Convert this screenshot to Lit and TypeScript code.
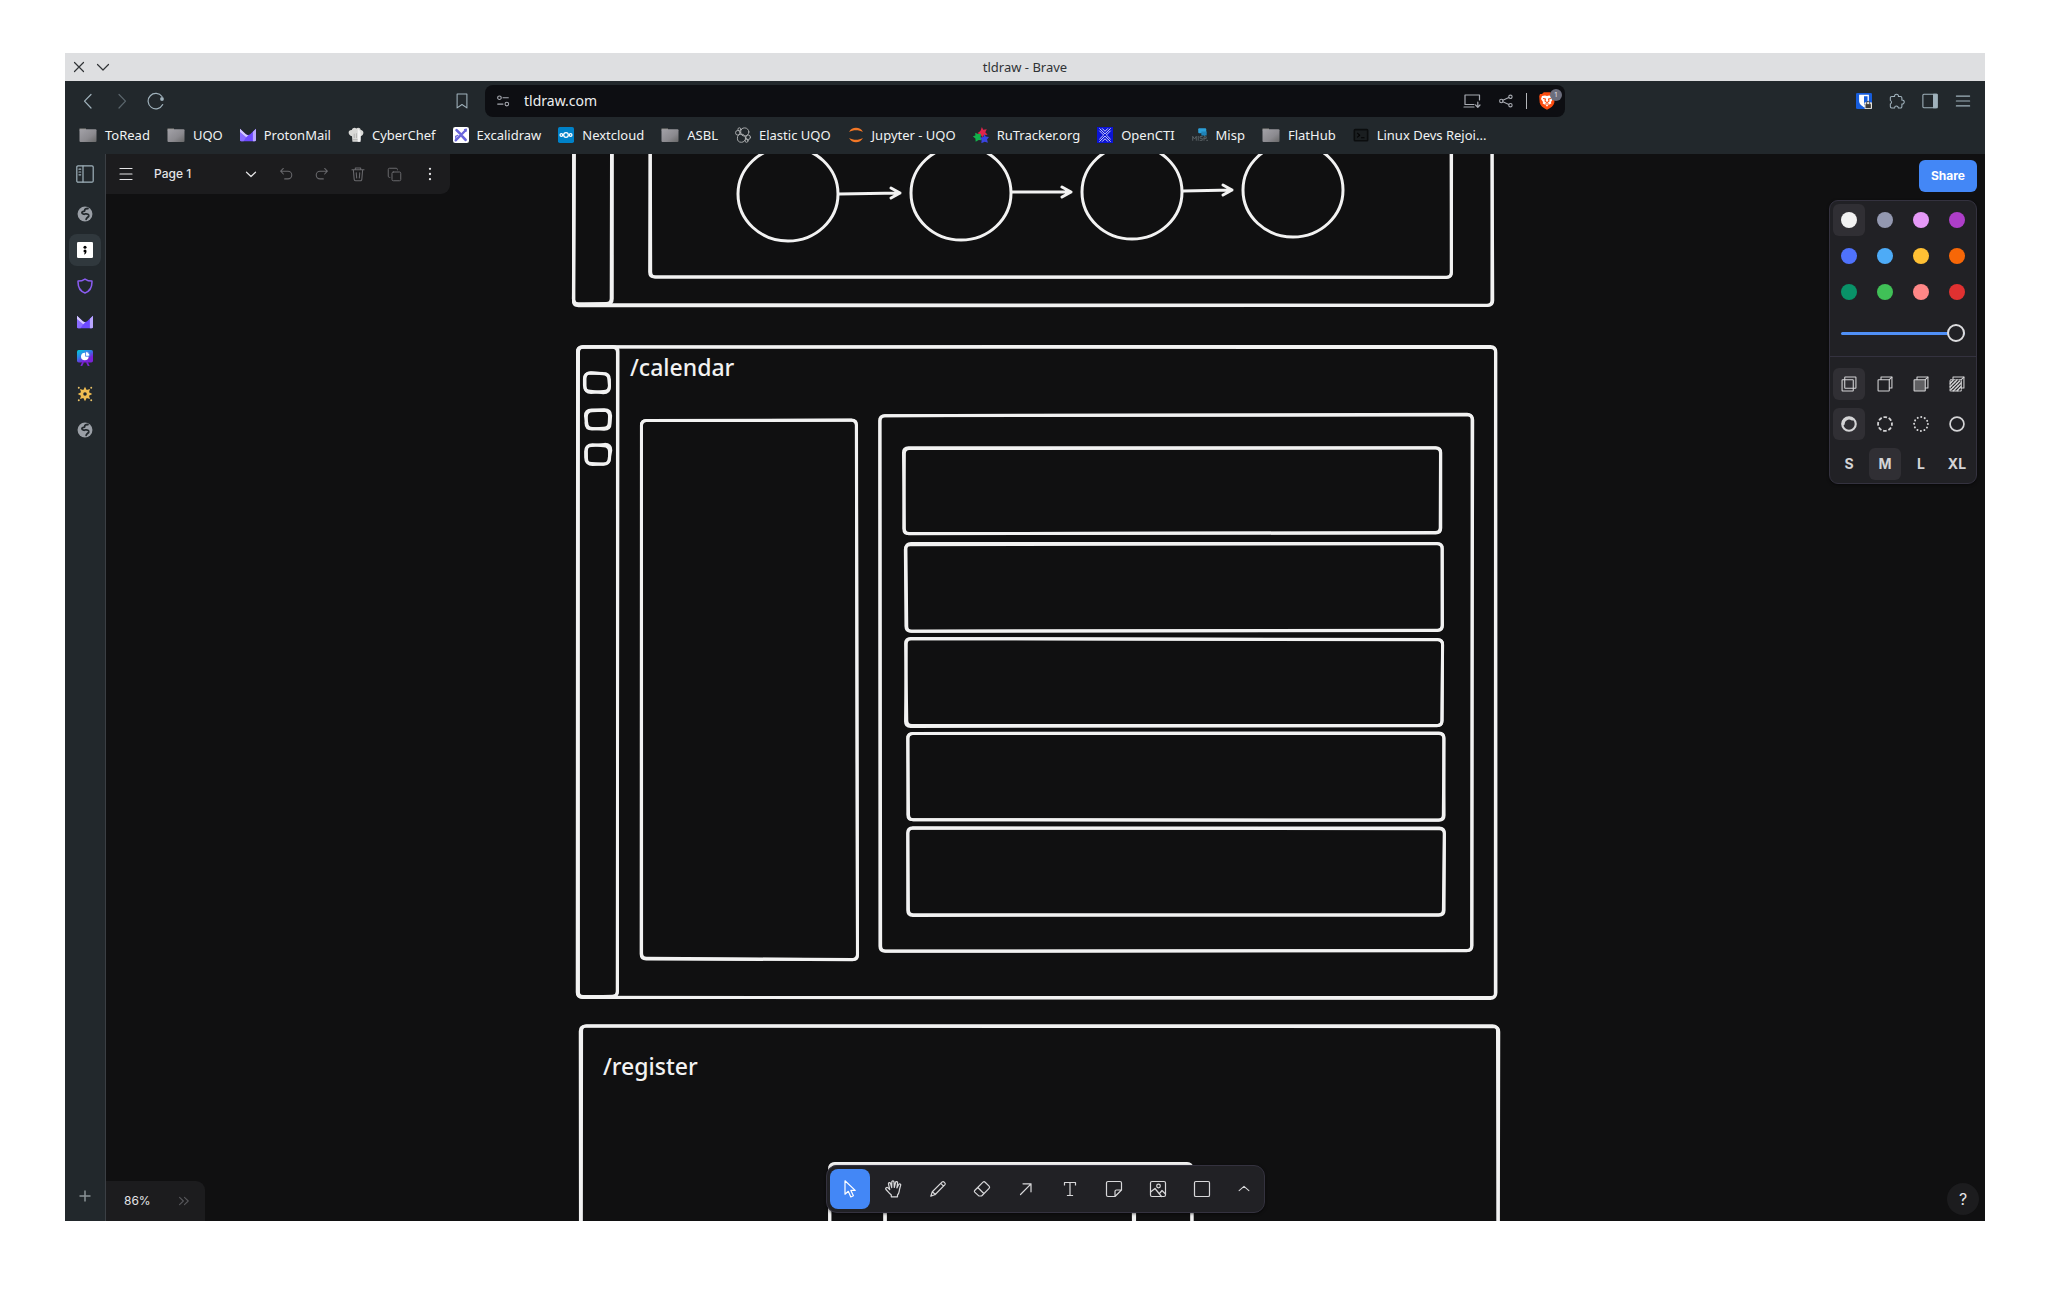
import { LitElement, html, svg, css } from "lit";
import { customElement, state } from "lit/decorators.js";
import { classMap } from "lit/directives/class-map.js";

const icon = (body: unknown, size = 18) =>
  html`<svg class="ic" width=${size} height=${size} viewBox="0 0 18 18" fill="none" stroke="currentColor" stroke-width="1.2" stroke-linecap="round" stroke-linejoin="round" aria-hidden="true">${body}</svg>`;

/* ---------- browser icons ---------- */
const folder = svg`<defs><linearGradient id="fg" x1="0" y1="0" x2="1" y2="1"><stop offset="0" stop-color="#a3a2a8"/><stop offset=".6" stop-color="#8b8a8f"/><stop offset="1" stop-color="#686868"/></linearGradient></defs>
  <path d="M.5 2.5h6.5v1.5h-6.5z" fill="#8c8b84" stroke="none"/><rect x=".5" y="3.2" width="17" height="12.8" rx="1" fill="url(#fg)" stroke="none"/>`;
const proton = svg`<path d="M0 2L6.600 8.200Q9 10 11.400 8.200L18 2V14.500Q18 16 16.500 16H1.500Q0 16 0 14.500Z" fill="#6d4aff" stroke="none"/>
  <path d="M0 5.500L7 11.500 4 16H1.500Q0 16 0 14.500Z" fill="#8a6cff" stroke="none"/>
  <path d="M0 2L6.600 8.200Q8 9.300 9.500 9.200L7 11.500 0 5.500Z" fill="#d6caff" stroke="none"/><path d="M14.500 5.300L18 2V14.500Q18 16 16.500 16H14.500Z" fill="#b9a6ff" stroke="none"/>`;
const chef = svg`<path d="M4.500 10.500C-.5 9-.5 3 4.300 3.300 5 .8 8 .3 9.300 1.800 11 .2 14 .8 14.400 3.400c4 .2 4 6-.5 7.100v6H5z" fill="#d9d9d7" stroke="none"/><path d="M5 14.300h9M7 8v4M9.500 7.500v4.500M12 8v4" stroke="#aaa" stroke-width=".9"/><path d="M11 2c3 2 4 5 2.900 14.500h-3z" fill="#f4f4f4" stroke="none"/>`;
const excali = svg`<rect width="18" height="18" rx="2.500" fill="#fff" stroke="none"/><g stroke="#6965db"><path d="M3 15L14 4" stroke-width="2.600"/><path d="M4 3.500l4 4M10.500 10.500l3.700 4" stroke-width="3"/><path d="M13 3l2-.5-.5 2.500M5.500 9.500l-2.500 1 .5 4" stroke-width="1.500"/></g>`;
const nextcloud = svg`<rect width="18" height="18" rx="2" fill="#0082c9" stroke="none"/><g stroke="#fff" stroke-width="1.400"><circle cx="9" cy="9" r="2.600"/><circle cx="3.800" cy="9" r="1.500"/><circle cx="14.200" cy="9" r="1.500"/></g>`;
const elastic = svg`<g stroke="#b5b7b8" stroke-width="1"><circle cx="11" cy="5.600" r="4.600"/><circle cx="7.300" cy="12.600" r="4.600"/><circle cx="3.200" cy="6.500" r="2.600"/><circle cx="14.800" cy="11.500" r="2.600"/><circle cx="5" cy="2.600" r="1.700"/><circle cx="13" cy="15.500" r="1.700"/></g>`;
const jupyter = svg`<path d="M1.200 5.500C4-.8 14-.8 16.800 5.500 12 2.900 6 2.900 1.200 5.500zM1.200 12.500c2.800 6.300 12.800 6.300 15.600 0-4.800 2.600-10.800 2.600-15.600 0z" fill="#f37726" stroke="none"/>`;
const rutracker = svg`<g stroke="none"><path d="M10 0l1.500 3 4-.5-1.700 3.500 2.700 2.700-4 .3-2.200 2.500-1.600-3.200-3.700-1.300 3.300-2.500z" fill="#e0244a"/><path d="M2.500 6.500l3 1.500L9 7.500l-.4 3.800 1.400 3.500-3.600-.3L3 16.500l-.3-3.700L-.3 10.500l3-.8z" fill="#12b24b"/><path d="M13 8l1.300 2.700 3.700.6-2.200 2.700 1 3.800-3.700-1.200-3.700 1.700.3-4L7.800 12l3.800-.8z" fill="#3a44e0"/></g>`;
const opencti = svg`<rect width="18" height="18" fill="#0b14d6" stroke="none"/><g stroke="#fff" stroke-width=".9"><path d="M3 1.800l6 6 6-6M6 1.800l3 3 3-3M3 16.200l6-6 6 6M6 16.200l3-3 3 3M3 4.500L7.500 9 3 13.500M15 4.500L10.500 9l4.500 4.500"/></g>`;
const misp = svg`<g stroke="none"><rect x="7" y="1.500" width="9" height="5.500" rx="1" fill="#2c9fd8"/><path d="M10.500 5h6v4.500h-2l-1 1.500v-1.500h-3z" fill="#1f83b8"/></g><path d="M.8 15v-4.500l2 3 2-3V15M7 10.500V15M11.500 10.700H9v2h2.500V15H9M13.500 15v-4h2.500v2h-2.500M16.500 15h1.500" stroke="#596064" stroke-width="1.100"/>`;
const terminal = svg`<rect x="1.500" y="3" width="15" height="12.500" rx="1" stroke="#0b0d0e" fill="#1a1e20" stroke-width="1.800"/><path d="M5 7l2.500 2.300L5 11.500M9.500 12h3" stroke="#050505"/>`;
const globe = svg`<circle cx="9" cy="9" r="8.400" fill="#9a9fa6" stroke="none"/><path d="M12.300 2.800c-2.800 0-3.800.6-3.600 2.200.1 1.500-3 .8-3.200 2.500C5.400 9 7 8.900 8.200 9.300M9.200 8.900c2.500-.4 4.300.4 4 2.300-.3 1.500-2.200 1.500-2.900 3.800" stroke="#22282c" stroke-width="2"/>`;
const tld = svg`<rect width="18" height="18" rx="1.500" fill="#fff" stroke="none"/><circle cx="9" cy="5.800" r="1.700" fill="#000" stroke="none"/><path d="M7.300 10.200a1.700 1.700 0 0 1 3.400 0c0 1.800-.8 3.300-2.400 4l-.5-.6c.8-.5 1.100-1.100 1.200-1.700a1.700 1.700 0 0 1-1.700-1.700z" fill="#000" stroke="none"/>`;
const shield = svg`<path d="M9 1.200c2.200 1.500 5 2.300 7.800 2.300.3 6.500-1.600 11.200-7.800 13.300C2.800 14.700.9 10 1.200 3.500 4 3.500 6.800 2.700 9 1.200z" stroke="#8a5cf0" stroke-width="1.700"/>`;
const slides = svg`<defs><linearGradient id="sg" x1="0" y1="0" x2=".7" y2="1"><stop offset="0" stop-color="#00d0d8"/><stop offset=".45" stop-color="#2f7fe8"/><stop offset=".8" stop-color="#7a22d8"/></linearGradient></defs><rect x="0" y="0" width="18" height="14" rx="2" fill="url(#sg)" stroke="none"/><path d="M6.500 14.500l-1.500 3M11.500 14.500l1.500 3" stroke="#7b24d6" stroke-width="2"/><circle cx="8.800" cy="7.300" r="4.300" fill="#fff" stroke="none"/><path d="M9.600 6.600V1.700a4.700 4.700 0 0 1 4.800 4.900z" fill="#fff" stroke="#3a76e4" stroke-width=".9"/>`;
const sun = svg`<path d="M9 .8l1.900 3.700 3.700-1.100-1.100 3.700L17.200 9l-3.700 1.900 1.100 3.700-3.700-1.100L9 17.200l-1.900-3.700-3.700 1.100 1.100-3.700L.8 9l3.700-1.900-1.100-3.700 3.700 1.100z" fill="#f0bd52" stroke="none"/><circle cx="9" cy="9" r="2" fill="#22282c" stroke="none"/><g fill="#e8c26a" stroke="none"><circle cx="2" cy="2" r="1.100"/><circle cx="16" cy="2" r="1.100"/><circle cx="2" cy="16" r="1.100"/><circle cx="16" cy="16" r="1.100"/></g>`;

const back = svg`<path d="M12 2.500L5.500 9.200 12 16"/>`;
const fwd = svg`<path d="M6 2.500l6.500 6.700L6 16"/>`;
const reload = svg`<path d="M15.700 12.600A7.700 7.700 0 1 1 15 4.500"/><circle cx="15" cy="7" r="1.900" fill="currentColor" stroke="none"/>`;
const bookmark = svg`<path d="M3.500 1.200h11v15.600L9 13l-5.500 3.800z"/>`;
const tune = svg`<circle cx="5" cy="5.300" r="2"/><path d="M9 5.300h6M3 12.500h6"/><circle cx="13.300" cy="12.500" r="2"/>`;
const install = svg`<path d="M16.500 8V3H2v9.500M1 15h10M2 12.500h9M14.800 10v5M12.600 13l2.200 2.300L17 13"/>`;
const shareIc = svg`<circle cx="3.700" cy="9" r="1.900"/><circle cx="14" cy="4.300" r="1.900"/><circle cx="14" cy="13.700" r="1.900"/><path d="M5.500 8.200l6.700-3.100M5.500 9.800l6.700 3.100"/>`;
const brave = svg`<path d="M9 .3l3.200 0L14 2l2-.1.800 2.300-.5 6.500c-.5 3-3.500 5-7.300 7-3.800-2-6.800-4-7.300-7l-.5-6.500L2 1.900 4 2 5.800.3z" fill="#fb4c10" stroke="none"/><path d="M4 4l3-.6 2 .6 2-.6 3 .6 1 3-2 3 .3 1.500-3 1.500L9 14.700 7.700 13l-3-1.500L5 10 3 7z" fill="#fff" stroke="none"/><path d="M5.500 6.500l2 .6-.5 2 2 1.500 2-1.500-.5-2 2-.6M7.500 12h3" stroke="#fb4c10" stroke-width="1.100"/>`;
const bitwarden = svg`<rect width="18" height="18" rx="1.500" fill="#175ddc" stroke="none"/><path d="M3.500 2h11v7c0 3.500-3 5.500-5.500 7-2.500-1.500-5.500-3.500-5.500-7z" fill="#fff" stroke="none"/><path d="M9 3.700h4V9c0 1.800-1.600 3.500-4 5z" fill="#175ddc" stroke="none"/><rect x="9.500" y="10.500" width="8.500" height="7.500" rx="1" fill="#e8e4da" stroke="none"/><rect x="10.700" y="12.500" width="6" height="4.500" fill="#3c3c3c" stroke="none"/><path d="M12 12.500v-1.500a1.700 1.700 0 0 1 3.400 0v1.500" stroke="#3c3c3c" stroke-width="1"/>`;
const puzzle = svg`<path d="M1.500 5.500A1.500 1.500 0 0 1 3 4h3.300a2.200 2.200 0 1 1 4.300 0H13a1.500 1.500 0 0 1 1.500 1.500V8a2.200 2.200 0 1 1 0 4.300v3a1.500 1.500 0 0 1-1.500 1.500h-2.500a2.100 2.100 0 1 0-4.200 0H3a1.500 1.500 0 0 1-1.500-1.500v-3a2.200 2.200 0 0 0 0-4z"/>`;
const sidePanel = svg`<rect x="1" y="1.500" width="16" height="15" rx="1"/><path d="M13 1.500H17v15h-4z" fill="currentColor"/>`;
const burger = svg`<path d="M1.500 3.500h15M1.500 9h15M1.500 14.500h15"/>`;
const vtabs = svg`<rect x=".8" y=".8" width="16.400" height="16.400" rx="1.200"/><path d="M7 1v16M3 4.200h1.700M3 7h1.700M3 9.800h1.700"/>`;
const plus = svg`<path d="M9 3.500v11M3.500 9h11" stroke-width="1.500" stroke-linecap="butt"/>`;

/* ---------- editor icons ---------- */
const chevDown = svg`<path d="M4.500 7.200L9 11.500l4.500-4.300"/>`;
const chevUp = svg`<path d="M3.500 10.800L9 6l5.500 4.800"/>`;
const undo = svg`<path d="M6 2.800L3 5.900 6 9M3 5.900h8.200a4.300 4.300 0 0 1 0 8.600H7.500"/>`;
const redo = svg`<path d="M12 2.800l3 3.100L12 9M15 5.900H6.800a4.300 4.300 0 0 0 0 8.600h3.700"/>`;
const trash = svg`<path d="M2.200 4.300h13.600M6 4V2.300h6V4M3.800 4.500l.9 10.500a1.500 1.500 0 0 0 1.500 1.500h5.600a1.500 1.500 0 0 0 1.500-1.500l.9-10.500M7 7.500l.5 6M11 7.500l-.5 6"/>`;
const dup = svg`<rect x="6" y="6" width="10.500" height="10.500" rx="1.500"/><path d="M3.500 12.500H3A1.500 1.500 0 0 1 1.500 11V3A1.500 1.500 0 0 1 3 1.500h8A1.500 1.500 0 0 1 12.500 3v.5"/>`;
const dots = svg`<g fill="currentColor" stroke="none"><circle cx="9" cy="3.200" r="1.300"/><circle cx="9" cy="9" r="1.300"/><circle cx="9" cy="14.800" r="1.300"/></g>`;
const more = svg`<path d="M4 4.800L8.300 9 4 13.200M9.500 4.800L13.800 9 9.500 13.200"/>`;
const select = svg`<path d="M4 .8v13.400l3.300-2.900 2.500 5.700 2.600-1.200-2.500-5.400h4.300z"/>`;
const hand = svg`<path d="M5 13.800L1 9.500c-1-1.300.8-2.700 2-1.600l1.700 1.600L3.500 4c-.3-1.600 1.700-2 2.100-.5l1.100 4.200L6.800 2c0-1.500 2.200-1.500 2.200 0l.3 5.500L10.500 2.500c.3-1.400 2.300-1 2.100.4l-.7 5 1.800-3.400c.8-1.300 2.400-.4 1.900.9L14.500 9.500c-.5 2.500-.3 4-2 5.500v1.800H6.300V15z"/>`;
const pencil = svg`<path d="M1.800 16.200l1.500-4.500L13.200 1.900c1.300-1 3.800 1.300 2.800 2.700L6.200 14.500zM3.400 11.700l2.800 2.800M11.800 3.400l2.700 2.700"/>`;
const eraser = svg`<path d="M1.700 10.500L10 2.200a1.500 1.500 0 0 1 2.100 0l4 4a1.500 1.500 0 0 1 0 2.100l-7 7.200a1.800 1.800 0 0 1-1.300.5H6.500a1.500 1.500 0 0 1-1-.4l-3.800-3.500a1.200 1.200 0 0 1 0-1.600zM4.800 7.500l6 6"/>`;
const arrow = svg`<path d="M3.500 14.500L14 3.800M6 3.800h8v8"/>`;
const textT = svg`<path d="M3.500 5V2.500h11V5M9 2.500v13M6.500 15.500h5" stroke-linecap="square"/>`;
const note = svg`<path d="M16.500 10V3A1.500 1.500 0 0 0 15 1.500H3A1.500 1.500 0 0 0 1.500 3v12A1.500 1.500 0 0 0 3 16.500h7zM10 16.500V11.500A1.500 1.500 0 0 1 11.500 10h5"/>`;
const image = svg`<rect x="1.500" y="1.500" width="15" height="15" rx="1.500"/><circle cx="9.500" cy="6" r="1.800"/><path d="M1.500 12L6 8.500l6.500 8M10.500 13.500L13 10.500l3.500 3.500"/>`;
const square = svg`<rect x="1.500" y="1.500" width="15" height="15" rx="1.300"/>`;

const backFace = svg`<path d="M4.500 4V1.200h12.300v12.300H14"/>`;
const fillNone = svg`<rect x="1.200" y="4.200" width="12.600" height="12.600" rx=".5"/><rect x="4.200" y="1.200" width="12.600" height="12.600" rx=".5"/>`;
const fillSemi = svg`<rect x="1.200" y="4.200" width="12.600" height="12.600" rx=".5"/>${backFace}<path d="M13.800 4.200l3-3"/>`;
const fillSolid = svg`<rect x="1.200" y="4.200" width="12.600" height="12.600" rx=".5" fill="#606063"/>${backFace}<path d="M13.800 4.200l3-3"/>`;
const fillPattern = svg`<rect x="1.200" y="4.200" width="12.600" height="12.600" rx=".5" stroke-dasharray="2 1.300"/>${backFace}<path d="M1.500 8l3-3M1.500 12l7-7M2 15.500L12 5.500M5 16.500l8.500-8.500M9 16.500l4.500-4.500" stroke-width="1.700" stroke-dasharray="2 1"/><path d="M13.800 4.200l3-3"/>`;
const dashDraw = svg`<circle cx="9" cy="9" r="7.600" stroke-width="2.400"/><path d="M2.500 9A6.500 6.500 0 0 1 12.500 3.500" stroke-width="3.200"/>`;
const dashDashed = svg`<circle cx="9" cy="9" r="7.800" stroke-width="2" stroke-linecap="butt" stroke-dasharray="4.100 2.020" stroke-dashoffset="2"/>`;
const dashDotted = svg`<circle cx="9" cy="9" r="7.800" stroke-width="2.200" stroke-dasharray="0.100 3.984"/>`;
const dashSolid = svg`<circle cx="9" cy="9" r="7.800" stroke-width="1.900"/>`;

const BOOKMARKS: [string, unknown, number][] = [
  ["ToRead", folder, 18], ["UQO", folder, 18], ["ProtonMail", proton, 16], ["CyberChef", chef, 16],
  ["Excalidraw", excali, 16], ["Nextcloud", nextcloud, 16], ["ASBL", folder, 18], ["Elastic UQO", elastic, 16],
  ["Jupyter - UQO", jupyter, 16], ["RuTracker.org", rutracker, 16], ["OpenCTI", opencti, 16],
  ["Misp", misp, 16], ["FlatHub", folder, 18], ["Linux Devs Rejoi...", terminal, 16],
];

const TABS: [string, unknown][] = [
  ["New tab", globe], ["tldraw", tld], ["Shield", shield], ["Proton Mail", proton],
  ["Slides", slides], ["Sun", sun], ["Site", globe],
];

const TOOLS: [string, unknown][] = [
  ["Select", select], ["Hand", hand], ["Draw", pencil], ["Eraser", eraser], ["Arrow", arrow],
  ["Text", textT], ["Note", note], ["Asset", image], ["Rectangle", square],
];

const COLORS = ["#f2f2f2", "#9398b0", "#e599f7", "#ae3ec9", "#4f72fc", "#4dabf7", "#ffc034", "#f76707", "#099268", "#40c057", "#ff8787", "#e03131"];

/* ---------- sketch ---------- */
type Box = [number, number, number, number, number?];
const BOXES: Box[] = [
  [574, 40, 1492, 305], [574, 40, 612, 304], [650, 40, 1451, 277],
  [578, 347, 1496, 998], [578, 347, 618, 997],
  [585, 373, 609, 392, 6], [586, 410, 610, 429, 6], [586, 445, 610, 464, 6],
  [641, 420, 857, 959], [880, 415, 1472, 951],
  [904, 448, 1440, 533], [906, 544, 1442, 631], [906, 639, 1442, 726], [908, 733, 1444, 820], [908, 828, 1444, 915],
  [581, 1026, 1498, 1400], [830, 1164, 1192, 1400], [885, 1190, 1134, 1400],
];
const CIRCLES = [[788, 194], [961, 193], [1132, 192], [1293, 190]];
const ARROWS = [[839, 194, 900, 193], [1012, 192, 1071, 192], [1183, 191, 1232, 190]];

const wobble = (seed: number) => {
  const v = Math.sin(seed * 12.9898) * 43758.5453;
  return (v - Math.floor(v) - 0.5) * 1.6;
};

/* A hand-drawn box is two passes of the same outline with slightly different corners. */
const sketchBox = ([x1, y1, x2, y2, r = 5]: Box, pass: number, index: number) => {
  const j = (k: number) => wobble(index * 17 + pass * 5 + k);
  const [ax, ay, bx, by] = [x1 + j(1), y1 + j(2), x2 + j(3), y1 + j(4)];
  const [cx, cy, dx, dy] = [x2 + j(5), y2 + j(6), x1 + j(7), y2 + j(8)];
  return `M${ax + r} ${ay}L${bx - r} ${by}Q${bx} ${by} ${bx} ${by + r}L${cx} ${cy - r}Q${cx} ${cy} ${cx - r} ${cy}L${dx + r} ${dy}Q${dx} ${dy} ${dx} ${dy - r}L${ax} ${ay + r}Q${ax} ${ay} ${ax + r} ${ay}Z`;
};

@customElement("app-root")
export class AppRoot extends LitElement {
  @state() private tool = 0;
  @state() private color = 0;
  @state() private fill = 0;
  @state() private dash = 0;
  @state() private size = 1;

  static styles = css`
    :host { display: flex; flex-direction: column; box-sizing: border-box; min-height: 100vh; padding: 53px 65px 77px; background: #fff; font: 13px/18px "Noto Sans", sans-serif; color: #f0f2f3; }
    * { box-sizing: border-box; }
    button { font: inherit; color: inherit; background: none; border: 0; padding: 0; margin: 0; display: inline-flex; align-items: center; justify-content: center; }
    a { color: inherit; text-decoration: none; }
    .ic { display: block; flex: none; }
    .window { flex: 1; display: flex; flex-direction: column; background: #22282c; }
    .titlebar { display: grid; grid-template-columns: 1fr auto 1fr; align-items: center; height: 28px; padding: 0 4px; background: #dedfe1; color: #303336; }
    .wbtns { display: flex; gap: 4px; }
    .wbtns button { width: 20px; height: 20px; }
    .title { font-size: 13px; }
    .nav { display: grid; grid-template-columns: 1fr minmax(0, 1080px) 1fr; align-items: center; height: 40px; color: #a0b2bc; }
    .left, .right { display: flex; align-items: center; gap: 10px; padding: 0 11px; }
    .right { justify-content: flex-end; gap: 9px; padding-right: 10px; }
    .nav button { width: 24px; height: 24px; }
    .dim { opacity: .45; }
    .push { margin-left: auto; }
    .url { display: flex; align-items: center; height: 32px; padding: 0 6px; background: #0d0e12; border-radius: 8px; color: #a8abb2; }
    .url input { flex: 1; min-width: 0; height: 24px; margin: 0 9px; padding: 0 0 2px; border: 0; outline: 0; background: none; color: #eceef0; font: 14px/20px "Noto Sans", sans-serif; }
    .url .end { display: flex; align-items: center; gap: 8px; }
    .url .pair { display: flex; gap: 10px; }
    .sep { width: 1px; height: 16px; background: #b5b7ba; }
    .brave { position: relative; }
    .badge { position: absolute; top: 0; right: -3px; width: 12px; height: 12px; border-radius: 6px; background: #6b6d7c; color: #e6e6ea; font-size: 7px; line-height: 12px; text-align: center; }
    .bookmarks { display: flex; align-items: center; gap: 17px; height: 33px; padding: 0 14px 5px; overflow: hidden; }
    .bookmarks a { display: flex; align-items: center; gap: 8px; white-space: nowrap; }
    .main { flex: 1; display: flex; min-height: 0; }
    .tabs { display: flex; flex-direction: column; align-items: center; gap: 4px; width: 41px; padding: 4px 0 9px; border-right: 1px solid #3b3f44; color: #a0b2bc; }
    .tabs button { width: 32px; height: 32px; border-radius: 8px; }
    .tabs .toggle { margin-bottom: 4px; }
    .tabs .active { background: #30383d; }
    .tabs .add { margin-top: auto; color: #8b9296; }
    .canvas { position: relative; flex: 1; overflow: hidden; background: #101011; font-family: Inter, sans-serif; font-size: 12px; }
    .board { position: absolute; inset: 0; width: 100%; height: 100%; }
    .ink { fill: none; stroke: #f2f2f2; stroke-width: 3px; stroke-linecap: round; stroke-linejoin: round; }
    .label { fill: #f2f2f2; font: 500 23px "Noto Sans", sans-serif; }
    .menu, .zoom { position: absolute; left: 0; display: flex; align-items: center; height: 40px; background: #1c1c1e; color: #e4e4e6; }
    .menu { top: 0; padding: 0 2px; border-radius: 0 0 9px 0; }
    .menu .mi { width: 36px; height: 40px; }
    .menu .page { width: 116px; height: 40px; margin-right: 8px; padding: 0 0 0 10px; justify-content: space-between; font-weight: 500; }
    .menu .off { color: #68686c; }
    .zoom { bottom: 0; padding: 0 3px 0 18px; gap: 15px; border-radius: 0 9px 0 0; }
    .zoom .mi { width: 36px; height: 40px; color: #58585c; }
    .side { position: absolute; top: 6px; right: 8px; display: flex; flex-direction: column; align-items: flex-end; gap: 8px; }
    .share { width: 58px; height: 32px; border-radius: 6px; background: #4387f6; color: #fff; font-weight: 700; }
    .panel { width: 148px; border: 1px solid #34323f; border-radius: 9px; background: #212125; color: #d4d4d6; box-shadow: 0 1px 3px #0008; }
    .group { display: grid; grid-template-columns: repeat(4, 32px); gap: 4px; padding: 3px 3px 0; }
    .group button { height: 32px; border-radius: 6px; }
    .group .on { background: #302f34; }
    .dot { width: 16px; height: 16px; border-radius: 50%; }
    .rows { row-gap: 8px; padding: 11px 3px 3px; border-top: 1px solid #34323f; font-weight: 700; font-size: 14px; }
    .slide { display: block; padding: 16px 11px 14px; }
    input[type="range"] { -webkit-appearance: none; appearance: none; display: block; width: 100%; height: 18px; margin: 0; background: none; }
    input[type="range"]::-webkit-slider-runnable-track { height: 3px; border-radius: 2px; background: #5090f7; }
    input[type="range"]::-webkit-slider-thumb { -webkit-appearance: none; width: 18px; height: 18px; margin-top: -8px; border: 2px solid #dcdcde; border-radius: 50%; background: #212125; }
    .dock { position: absolute; bottom: 8px; left: 0; right: 0; display: flex; justify-content: center; pointer-events: none; }
    .tools { display: flex; gap: 4px; padding: 3px; border: 1px solid #34323f; border-radius: 11px; background: #212125; color: #d8d8da; box-shadow: 0 1px 3px #0008; pointer-events: auto; }
    .tools button { width: 40px; height: 40px; border-radius: 8px; }
    .tools .on { background: #4387f6; color: #fff; }
    .tools .last { width: 35px; }
    .help { position: absolute; right: 6px; bottom: 6px; width: 32px; height: 32px; border-radius: 16px; background: #1c1c1e; color: #e4e4e6; font-size: 16px; }
  `;

  private picks(icons: unknown[], name: string, current: number, set: (i: number) => void) {
    return icons.map((ic, i) => html`<button class=${classMap({ on: i === current })} aria-label="${name} ${i + 1}" aria-pressed=${i === current} @click=${() => set(i)}>${ic}</button>`);
  }

  private board() {
    return html`<svg class="board" role="img" aria-label="Drawing"><g transform="translate(-106 -154)">
      ${BOXES.map((b, i) => [0, 1].map((p) => svg`<path class="ink" d=${sketchBox(b, p, i)} />`))}
      ${CIRCLES.map(([x, y]) => svg`<ellipse class="ink" cx=${x} cy=${y} rx="50" ry="47" />`)}
      ${ARROWS.map(([a, b, c, d]) => svg`<path class="ink" d="M${a} ${b}L${c} ${d}M${c - 9} ${d - 5}L${c} ${d}L${c - 9} ${d + 5}" />`)}
      <text class="label" x="630" y="376">/calendar</text>
      <text class="label" x="603" y="1075">/register</text>
    </g></svg>`;
  }

  render() {
    return html`<div class="window">
      <header class="titlebar">
        <div class="wbtns">
          <button aria-label="Close">${icon(svg`<path d="M4.500 4.500l9 9M13.500 4.500l-9 9"/>`)}</button>
          <button aria-label="Minimize">${icon(svg`<path d="M3.500 6.500L9 12l5.500-5.500"/>`)}</button>
        </div>
        <span class="title">tldraw - Brave</span>
      </header>
      <div class="nav">
        <div class="left">
          <button aria-label="Back">${icon(back)}</button>
          <button class="dim" aria-label="Forward">${icon(fwd)}</button>
          <button aria-label="Reload">${icon(reload)}</button>
          <button class="push" aria-label="Bookmark">${icon(bookmark, 16)}</button>
        </div>
        <div class="url">
          <button aria-label="Site settings">${icon(tune, 16)}</button>
          <input aria-label="Address" .value=${"tldraw.com"} />
          <div class="end">
            <div class="pair">
              <button aria-label="Install">${icon(install)}</button>
              <button aria-label="Share page">${icon(shareIc, 16)}</button>
            </div>
            <span class="sep"></span>
            <button class="brave" aria-label="Shields">${icon(brave)}<span class="badge">1</span></button>
          </div>
        </div>
        <div class="right">
          <button aria-label="Bitwarden">${icon(bitwarden, 16)}</button>
          <button aria-label="Extensions">${icon(puzzle, 16)}</button>
          <button aria-label="Side panel">${icon(sidePanel, 16)}</button>
          <button aria-label="Menu">${icon(burger, 16)}</button>
        </div>
      </div>
      <nav class="bookmarks" aria-label="Bookmarks">
        ${BOOKMARKS.map(([t, ic, s]) => html`<a href="#">${icon(ic, s)}<span>${t}</span></a>`)}
      </nav>
      <div class="main">
        <aside class="tabs">
          <button class="toggle" aria-label="Toggle tabs">${icon(vtabs)}</button>
          ${TABS.map(([t, ic], i) => html`<button class=${classMap({ active: i === 1 })} aria-label=${t}>${icon(ic, 16)}</button>`)}
          <button class="add" aria-label="Add tab">${icon(plus)}</button>
        </aside>
        <main class="canvas">
          ${this.board()}
          <div class="menu">
            <button class="mi" aria-label="Main menu">${icon(svg`<path d="M3 3.500h12M3 9h12M3 14.500h12"/>`)}</button>
            <button class="page"><span>Page 1</span>${icon(chevDown)}</button>
            <button class="mi off" aria-label="Undo">${icon(undo, 16)}</button>
            <button class="mi off" aria-label="Redo">${icon(redo, 16)}</button>
            <button class="mi off" aria-label="Delete">${icon(trash, 16)}</button>
            <button class="mi off" aria-label="Duplicate">${icon(dup, 15)}</button>
            <button class="mi" aria-label="More">${icon(dots, 16)}</button>
          </div>
          <div class="side">
            <button class="share">Share</button>
            <section class="panel" aria-label="Styles">
              <div class="group">
                ${this.picks(COLORS.map((c) => html`<span class="dot" style="background:${c}"></span>`), "Color", this.color, (i) => (this.color = i))}
              </div>
              <label class="slide"><input type="range" min="0" max="100" value="100" aria-label="Opacity" /></label>
              <div class="group rows">
                ${this.picks([fillNone, fillSemi, fillSolid, fillPattern].map((i) => icon(i, 16)), "Fill", this.fill, (i) => (this.fill = i))}
                ${this.picks([dashDraw, dashDashed, dashDotted, dashSolid].map((i) => icon(i, 16)), "Dash", this.dash, (i) => (this.dash = i))}
                ${this.picks(["S", "M", "L", "XL"], "Size", this.size, (i) => (this.size = i))}
              </div>
            </section>
          </div>
          <div class="zoom">
            <button>86%</button>
            <button class="mi" aria-label="Toggle minimap">${icon(more, 16)}</button>
          </div>
          <div class="dock">
            <div class="tools" role="toolbar" aria-label="Tools">
              ${TOOLS.map(([t, ic], i) => html`<button class=${classMap({ on: i === this.tool })} aria-label=${t} @click=${() => (this.tool = i)}>${icon(ic)}</button>`)}
              <button class="last" aria-label="More tools">${icon(chevUp, 16)}</button>
            </div>
          </div>
          <button class="help" aria-label="Help">?</button>
        </main>
      </div>
    </div>`;
  }
}
